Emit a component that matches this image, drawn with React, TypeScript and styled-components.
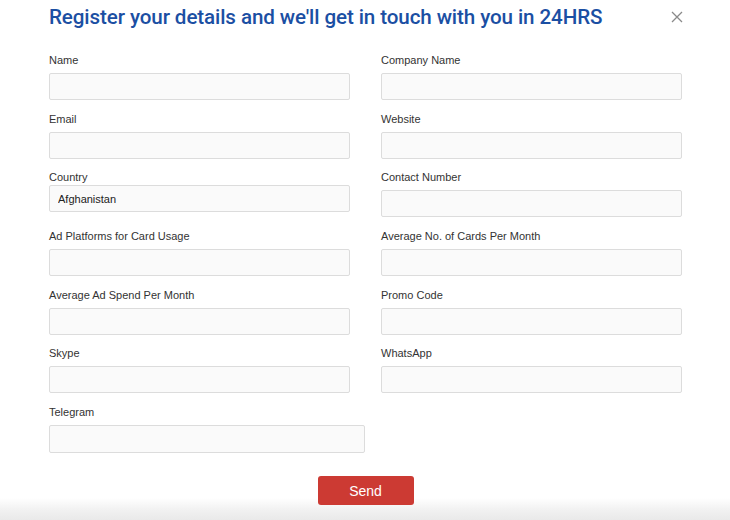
import styled, { createGlobalStyle } from "styled-components";

const GlobalStyle = createGlobalStyle`
  html, body {
    margin: 0;
    padding: 0;
  }
  body {
    font-family: "Liberation Sans", Arial, sans-serif;
    background: #fff;
  }
`;

export const Modal = styled.div`
  position: relative;
  width: 730px;
  height: 520px;
  box-sizing: border-box;
  padding: 3px 48px 0 49px;
  background: linear-gradient(
    to bottom,
    #fff 0,
    #fff 498px,
    #f1f1f1 510px,
    #e9e9e9 520px
  );
  overflow: hidden;
`;

export const Header = styled.div`
  display: flex;
  align-items: center;
  justify-content: space-between;
  height: 28px;

  h1 {
    margin: 0;
    font-family: Roboto, "Liberation Sans", Arial, sans-serif;
    font-size: 20.6px;
    font-weight: 500;
    color: #1b4fa3;
    letter-spacing: -0.1px;
    white-space: nowrap;
  }
`;

export const CloseButton = styled.button`
  display: flex;
  align-items: center;
  justify-content: center;
  width: 16px;
  height: 16px;
  padding: 0;
  margin-right: -3px;
  border: none;
  background: none;
  cursor: pointer;
`;

export const FormGrid = styled.div`
  display: grid;
  grid-template-columns: 301px 301px;
  column-gap: 31px;
  row-gap: 11.7px;
  margin-top: 22px;
`;

export const Field = styled.label<{ $wide?: boolean; $tight?: boolean }>`
  display: flex;
  flex-direction: column;
  gap: ${(p) => (p.$tight ? "1px" : "6px")};
  width: ${(p) => (p.$wide ? "316px" : "301px")};

  span {
    font-size: 11px;
    line-height: 14px;
    color: #333;
  }
`;

export const Input = styled.input<{ $tall?: boolean }>`
  box-sizing: border-box;
  width: 100%;
  height: ${(p) => (p.$tall ? "28px" : "27px")};
  padding: 0 8px;
  border: 1px solid #dcdcdc;
  border-radius: 2px;
  background: #fafafa;
  font-family: "Liberation Sans", Arial, sans-serif;
  font-size: 11px;
  color: #222;
  outline: none;
`;

export const Footer = styled.div`
  display: flex;
  justify-content: center;
  margin-top: 23px;
`;

export const SendButton = styled.button`
  width: 96px;
  height: 29px;
  border: none;
  border-radius: 3px;
  background: #cc3a33;
  color: #fff;
  font-family: "Liberation Sans", Arial, sans-serif;
  font-size: 14px;
  cursor: pointer;
`;

const rows: [string, string | null][] = [
  ["Name", "Company Name"],
  ["Email", "Website"],
  ["Country", "Contact Number"],
  ["Ad Platforms for Card Usage", "Average No. of Cards Per Month"],
  ["Average Ad Spend Per Month", "Promo Code"],
  ["Skype", "WhatsApp"],
  ["Telegram", null],
];

export default function App() {
  return (
    <>
      <GlobalStyle />
      <Modal>
        <Header>
          <h1>Register your details and we'll get in touch with you in 24HRS</h1>
          <CloseButton aria-label="Close">
            <svg width="12" height="12" viewBox="0 0 12 12">
              <path d="M1 1L11 11M11 1L1 11" stroke="#8a8a8a" strokeWidth="1.3" />
            </svg>
          </CloseButton>
        </Header>
        <FormGrid>
          {rows.map(([left, right]) => (
            <>
              <Field key={left} $wide={left === "Telegram"} $tight={left === "Country"}>
                <span>{left}</span>
                <Input
                  $tall={left === "Telegram"}
                  defaultValue={left === "Country" ? "Afghanistan" : ""}
                />
              </Field>
              {right && (
                <Field key={right}>
                  <span>{right}</span>
                  <Input />
                </Field>
              )}
            </>
          ))}
        </FormGrid>
        <Footer>
          <SendButton>Send</SendButton>
        </Footer>
      </Modal>
    </>
  );
}
